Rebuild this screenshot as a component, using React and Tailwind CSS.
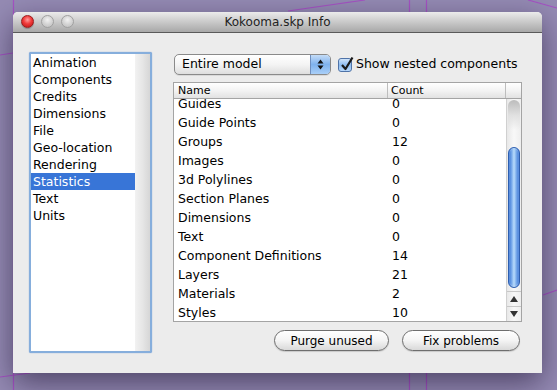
import React from "react";

const listItems = ["Animation","Components","Credits","Dimensions","File","Geo-location","Rendering","Statistics","Text","Units"];
const rows = [["Guides","0"],["Guide Points","0"],["Groups","12"],["Images","0"],["3d Polylines","0"],["Section Planes","0"],["Dimensions","0"],["Text","0"],["Component Definitions","14"],["Layers","21"],["Materials","2"],["Styles","10"]];

function Background() {
  return (
    <svg className="absolute inset-0" width="557" height="390" viewBox="0 0 557 390">
      <g stroke="#a653c4" strokeWidth="1.2" fill="none">
        <line x1="13.5" y1="0" x2="13.5" y2="390" />
        <line x1="409.5" y1="0" x2="409.5" y2="390" />
        <line x1="426.5" y1="0" x2="426.5" y2="390" />
        <line x1="288" y1="11" x2="365" y2="0" />
        <line x1="528" y1="0" x2="557" y2="8" />
        <line x1="0" y1="55" x2="13" y2="53" />
        <line x1="0" y1="377" x2="30" y2="373" />
        <line x1="543" y1="295" x2="557" y2="290" />
      </g>
    </svg>
  );
}

function Light({ red }) {
  return red ? (
    <div className="w-[13px] h-[13px] rounded-full border border-[#9a1d1d] bg-[radial-gradient(circle_at_50%_35%,#ff9c9c_0%,#f03a3a_45%,#b81414_100%)] shadow-[0_1px_1px_rgba(0,0,0,0.25)]" />
  ) : (
    <div className="w-[13px] h-[13px] rounded-full border border-[#a0a0a0] bg-[radial-gradient(circle_at_50%_35%,#f2f2f2_0%,#d4d4d4_50%,#bdbdbd_100%)]" />
  );
}

export default function App() {
  return (
    <div className="relative w-[557px] h-[390px] overflow-hidden bg-[#958bb4] font-['DejaVu_Sans',sans-serif] text-black">
      <Background />
      <div className="absolute left-[13px] top-[12px] w-[529px] h-[361px] rounded-t-[5px] bg-[#ececec] shadow-[0_10px_30px_rgba(20,10,40,0.55)] flex flex-col overflow-hidden">
        {/* Title bar */}
        <div className="relative h-[21px] shrink-0 border-b border-[#5a5a5a] bg-gradient-to-b from-[#ebebeb] to-[#a8a8a8] flex items-center justify-center">
          <div className="absolute left-[8px] top-[3px] flex gap-[7px]">
            <Light red />
            <Light />
            <Light />
          </div>
          <span className="text-[12px] text-[#222] leading-none">Kokooma.skp Info</span>
        </div>

        {/* Body */}
        <div className="flex pl-[16px] pt-[19px]">
          {/* List */}
          <div className="w-[123px] h-[301px] border-2 border-[#86aedc] rounded-[2px] bg-white flex shadow-[0_0_1px_#5b8fd0]">
            <div className="flex-1 flex flex-col">
              {listItems.map((it) => (
                <div
                  key={it}
                  className={`h-[17px] leading-[18px] pl-[2px] text-[12.5px] ${it === "Statistics" ? "bg-[#3875d7] text-white" : ""}`}
                >
                  {it}
                </div>
              ))}
            </div>
            <div className="w-[15px] bg-gradient-to-r from-[#f2f2f2] via-[#e6e6e6] to-[#d6d6d6]" />
          </div>

          {/* Right panel */}
          <div className="ml-[21px] w-[349px] flex flex-col pt-[2px]">
            <div className="flex items-center h-[21px]">
              <div className="ml-[1px] w-[157px] h-[21px] rounded-[5px] border border-[#8a8a8a] bg-gradient-to-b from-white via-[#f4f4f4] to-[#dedede] flex items-center overflow-hidden shadow-[0_1px_0_rgba(0,0,0,0.08)]">
                <span className="flex-1 pl-[7px] text-[12.5px] leading-none">Entire model</span>
                <div className="w-[20px] h-full border-l border-[#6f8fbf] bg-gradient-to-b from-[#c4dcf7] via-[#7fb2ee] to-[#a9cff8] flex items-center justify-center">
                  <svg width="7" height="11" viewBox="0 0 7 11">
                    <path d="M3.5 0.5 L6.5 4.5 L0.5 4.5 Z" fill="#111" />
                    <path d="M3.5 10.5 L6.5 6.5 L0.5 6.5 Z" fill="#111" />
                  </svg>
                </div>
              </div>
              <div className="relative ml-[7px] w-[14px] h-[14px] rounded-[3px] border border-[#4f73a8] bg-gradient-to-b from-[#d0e4fa] via-[#8dbcf0] to-[#b8d8fa]">
                <svg className="absolute left-[1px] top-[-3px]" width="14" height="16" viewBox="0 0 14 16">
                  <path d="M2 9 L5.5 13 L12.5 1.5" stroke="#1a1a1a" strokeWidth="2.2" fill="none" strokeLinejoin="round" />
                </svg>
              </div>
              <span className="ml-[4px] text-[12.5px] leading-none">Show nested components</span>
            </div>

            {/* Table */}
            <div className="mt-[7px] h-[240px] border border-[#a4a4a4] bg-white flex flex-col">
              <div className="relative z-10 h-[16px] shrink-0 border-b border-[#a4a4a4] bg-gradient-to-b from-white via-[#f3f3f3] to-[#e2e2e2] flex text-[11px] leading-[15px]">
                <div className="w-[214px] border-r border-[#bdbdbd] pl-[4px]">Name</div>
                <div className="w-[118px] border-r border-[#bdbdbd] pl-[3px]">Count</div>
                <div className="flex-1" />
              </div>
              <div className="flex-1 flex overflow-hidden">
                <div className="flex-1 overflow-hidden">
                  <div className="mt-[-4px]">
                    {rows.map(([n, c]) => (
                      <div key={n} className="h-[19px] flex items-center text-[12.5px]">
                        <div className="w-[214px] pl-[4px]">{n}</div>
                        <div className="pl-[4px]">{c}</div>
                      </div>
                    ))}
                  </div>
                </div>
                {/* Scrollbar */}
                <div className="w-[15px] flex flex-col border-l border-[#d0d0d0] bg-gradient-to-r from-[#e8e8e8] via-[#f8f8f8] to-[#eeeeee]">
                  <div className="flex-1 flex flex-col px-[1px] pt-[1px]">
                    <div className="h-[30px] rounded-t-full bg-gradient-to-b from-[#bcbcbc] via-[#e0e0e0] to-transparent" />
                    <div className="mt-[17px] h-[141px] rounded-full border border-[#2d5fb0] bg-gradient-to-r from-[#2f6fd3] via-[#b9dcfb] to-[#2f6fd3] shadow-[inset_0_0_2px_rgba(255,255,255,0.6)]" />
                  </div>
                  <div className="h-[15px] border-t border-[#c8c8c8] flex items-center justify-center">
                    <svg width="8" height="6" viewBox="0 0 8 6"><path d="M4 0 L8 6 L0 6 Z" fill="#333" /></svg>
                  </div>
                  <div className="h-[15px] border-t border-[#c8c8c8] flex items-center justify-center">
                    <svg width="8" height="6" viewBox="0 0 8 6"><path d="M0 0 L8 0 L4 6 Z" fill="#333" /></svg>
                  </div>
                </div>
              </div>
            </div>

            {/* Buttons */}
            <div className="mt-[8px] flex justify-end gap-[13px] pr-[2px]">
              <button className="w-[115px] h-[21px] rounded-full border border-[#6e6e6e] bg-gradient-to-b from-white via-[#f4f4f4] to-[#d9d9d9] text-[12px] leading-none shadow-[0_1px_1px_rgba(0,0,0,0.15)]">Purge unused</button>
              <button className="w-[118px] h-[21px] rounded-full border border-[#6e6e6e] bg-gradient-to-b from-white via-[#f4f4f4] to-[#d9d9d9] text-[12px] leading-none shadow-[0_1px_1px_rgba(0,0,0,0.15)]">Fix problems</button>
            </div>
          </div>
        </div>
      </div>
    </div>
  );
}
